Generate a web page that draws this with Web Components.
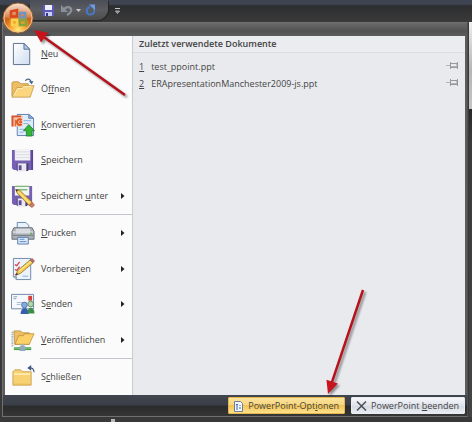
<!DOCTYPE html>
<html lang="de">
<head>
<meta charset="utf-8">
<title>PowerPoint</title>
<style>
  html, body { margin: 0; min-height: 100%; }
  body { font: 9px/14px "Open Sans", "Noto Sans", sans-serif; color: #444; background: #393939; overflow: hidden; }
</style>
</head>
<body>
<office-window></office-window>

<script>
const icons = {
  neu: `<defs><linearGradient id="g" x1="0" y1="0" x2="1" y2="1"><stop stop-color="#fff"/><stop offset="1" stop-color="#cfdcf0"/></linearGradient></defs>
    <path d="M2.5 1.5h11l6 6v16h-17z" fill="url(#g)" stroke="#5b7190"/><path d="M13.5 1.500v6h6z" fill="#aecbf0" stroke="#5b7190"/>`,
  oeffnen: `<path d="M1 20V6l1-1h6l2 2h8v3" fill="#eebf62" stroke="#b58a3a" stroke-width=".8"/>
    <path d="M1 21l5-10h6l1-2h11l-4 12z" fill="#fbd67e" stroke="#c2964a" stroke-width=".8"/>
    <path d="M3 19l4-7h5l1-2h8" fill="none" stroke="#ffeebb"/>
    <path d="M15 4c2-3 5-2 6 1" fill="none" stroke="#45648f" stroke-width="1.3"/><path d="M18.500 4.500h5l-2 3z" fill="#45648f"/>`,
  konvertieren: `<path d="M6.500 1.500h12l5 4v18h-17z" fill="#dfeafb" stroke="#5e7fae"/><path d="M18.500 1.500v4h5z" fill="#8fb5e8" stroke="#5e7fae"/>
    <path d="M13 8h8M13 11h5M9 17h5M9 20h4" stroke="#8bb0e0"/>
    <path d="M1 3h11v11H1z" fill="#f8c0a4"/><path d="M1.500 14V3.500h9" fill="none" stroke="#d4542c" stroke-width="2"/><path d="M4.500 14V7" stroke="#d4542c"/>
    <path d="M11 7.500a2.800 2.800 0 1 0 0 4M8.500 9.500h3" fill="none" stroke="#e2561f" stroke-width="2"/>
    <path d="M18.500 12l6 6.500H22V24h-6v-5.500h-3z" fill="#36b53a" stroke="#178224" stroke-width=".8"/>`,
  speichern: `<path d="M1 2h22v21H3l-2-2z" fill="#7660b4"/><path d="M22 2v21" stroke="#54418c" stroke-width="1.500"/>
    <path d="M4 1h16v12H4z" fill="#f4f4f7"/><path d="M4 4h16M4 7h16M4 10h16" stroke="#d9dae2"/>
    <path d="M6 16h12v8H6z" fill="#463b70"/><path d="M7 16h9v8H7z" fill="#e9e8f0"/><path d="M8 18h3v5H8z" fill="#5d4a9c"/>`,
  unter: `<path d="M1 2h21v20H3l-2-2z" fill="#7660b4"/><path d="M4 1h15v11H4z" fill="#f0f5ee"/><path d="M4 2.500h15M6 6h11" stroke="#80b980" stroke-width="1.500"/>
    <path d="M6 15h11v8H6z" fill="#463b70"/><path d="M7 15h8v8H7z" fill="#e9e8f0"/><path d="M8 17h3v5H8z" fill="#5d4a9c"/>
    <path d="M5 6l4 .5L22 19l-3 3.500L6.500 9.500z" fill="#f6cc55" stroke="#8b6a22" stroke-width=".8"/><path d="M7.500 8L20 20.500" stroke="#fff0a8"/><path d="M19 22.500l3-3.500 2.500 3-2.500 2.500z" fill="#d77a62" stroke="#8e4e46" stroke-width=".6"/><path d="M4.500 5.500l3 .8-1.500 1.800z" fill="#333"/>`,
  drucken: `<path d="M6.500 9V1.500h9l3 3V9" fill="#e9f1fc" stroke="#6786ad"/>
    <path d="M3 7h19l2 4v8H1v-8z" fill="#adb1b7" stroke="#696e76"/><path d="M5 8h15v5H5z" fill="#d8dbdf"/><path d="M2 11.500h3m15 0h3" stroke="#f4f4f4"/>
    <path d="M1.500 15h22" stroke="#777c84"/><path d="M20 13h2" stroke="#51b447" stroke-width="1.500"/><path d="M7 17h11v7H7z" fill="#dceafb" stroke="#587ba9"/><path d="M9 19h5M9 21.500h7" stroke="#5a8ac6"/>`,
  vorbereiten: `<path d="M2.500 1.500h18v22h-15l-3-3z" fill="#edf3fc" stroke="#6f88aa"/><path d="M2.500 20.500h3v3" fill="#bdd0ec" stroke="#6f88aa"/>
    <path d="M4 8l2 1 3-4M4 13l2 1 3-4M4 18l2 1" fill="none" stroke="#d1444c" stroke-width="1.300"/><path d="M12 20h6" stroke="#8caedb"/>
    <path d="M5 19l2-5L20 3l3 3L10 17z" fill="#f6cc55" stroke="#8b6a22" stroke-width=".8"/><path d="M8 15L21 4.500" stroke="#fff0a8"/><path d="M20 3l2-1.500 2.500 2.500-1.500 2z" fill="#bd6c68" stroke="#814b50" stroke-width=".6"/><path d="M5 19l1-2.500 1.500 1.500z" fill="#333"/>`,
  senden: `<path d="M.5 2.500h23v15H.5z" fill="#f5f8fc" stroke="#6f88aa"/><path d="M18 4h4v5h-4z" fill="#d8403c"/><path d="M2.500 5h4M2.500 7h3" stroke="#8f9cb0"/><path d="M6 11h6M6 13h4" stroke="#a7b9d3"/>
    <circle cx="14" cy="13.500" r="3" fill="#87a9dd" stroke="#375e9f" stroke-width=".7"/><path d="M10 23c0-8 8.500-8 8.500 0z" fill="#355fae"/>
    <circle cx="20.500" cy="12.500" r="3" fill="#b5d3b5" stroke="#38783c" stroke-width=".7"/><path d="M17 22.500c0-8 7.500-8 7.500 0z" fill="#3b8d48"/>`,
  publish: `<path d="M1.500 4v15" stroke="#8e9bad" stroke-width="2" stroke-dasharray="1 1"/><path d="M3 3h7l2 2h7v12H4z" fill="#eebf62" stroke="#b58a3a" stroke-width=".8"/>
    <path d="M4 17l4-9h5l1-2h10l-5 11z" fill="#fbd067" stroke="#bd8c34" stroke-width=".8"/><path d="M10 17h4v3h-4z" fill="#a9b7c5"/>
    <path d="M3 21.500h18" stroke="#4a9c4e" stroke-width="3"/><path d="M3 21h18" stroke="#8bcf87"/><path d="M9 19h6v5H9z" fill="#8fa9bd"/>`,
  schliessen: `<path d="M2 7l2-2h6l2 2h9v14H2z" fill="#f8d272" stroke="#bf9443" stroke-width=".8"/><path d="M3 9.500h17" stroke="#fff0bd" stroke-width="1.500"/><path d="M3 20h17" stroke="#e9b950"/>
    <path d="M19 3c3-.5 5 1.500 5 4.500" fill="none" stroke="#43587e" stroke-width="1.200"/><path d="M17 3l4-3v6z" fill="#43587e"/>`
};

function define(name, html, setup) {
  const tpl = document.createElement('template');
  tpl.innerHTML = html;
  customElements.define(name, class extends HTMLElement {
    constructor() {
      super();
      this.attachShadow({ mode: 'open' }).append(tpl.content.cloneNode(true));
    }
    connectedCallback() { if (setup) setup(this, this.shadowRoot); }
  });
}

define('menu-item', `
<style>
  :host { display: flex; flex: 1 0 30px; }
  button { flex: 1; display: grid; grid-template-columns: 24px 1fr 8px; column-gap: 6px; align-items: center;
    padding: 0 4px 0 6px; border: 0; background: none; font: inherit; color: inherit; text-align: left; white-space: nowrap; }
  .icon { width: 24px; height: 24px; }
  .more { width: 8px; height: 8px; }
</style>
<button type="button">
  <svg class="icon" viewBox="0 0 25 25" aria-hidden="true"></svg>
  <span><slot></slot></span>
</button>`, (el, root) => {
  root.querySelector('.icon').innerHTML = icons[el.getAttribute('icon')];
  if (el.hasAttribute('submenu')) {
    root.querySelector('button').setAttribute('aria-haspopup', 'menu');
    root.querySelector('button').insertAdjacentHTML('beforeend', '<svg class="more" viewBox="0 0 8 8" aria-hidden="true"><path d="M1 1l3.500 3-3.500 3z" fill="#222"/></svg>');
  }
});

define('menu-separator', `
<style>:host { display: block; height: 1px; margin: 0 0 1px 35px; background: #c3c6cb; }</style>`);

define('recent-document', `
<style>
  :host { display: flex; align-items: center; gap: 6px; height: 17px; padding: 0 6px; }
  a { flex: 1; display: flex; gap: 7px; color: inherit; text-decoration: none; white-space: nowrap; }
  button { width: 13px; height: 13px; padding: 0; border: 0; background: none; }
  svg { display: block; width: 13px; height: 13px; }
</style>
<a href="#"><u></u><span><slot></slot></span></a>
<button type="button" aria-label="Anheften"><svg viewBox="0 0 13 13"><path d="M0 5.500h4" stroke="#b4b6b9"/><path d="M4.500 2v7M5 3.500h6v4H5M11.500 2v7" fill="none" stroke="#97999c"/><path d="M5 6.500h6" stroke="#b0b2b5"/></svg></button>
`, (el, root) => { root.querySelector('u').textContent = el.getAttribute('number'); });

define('footer-button', `
<style>
  :host { display: flex; }
  button { display: flex; align-items: center; gap: 4px; height: 17px; padding: 0 5px 0 4px; border: 1px solid #e8ebf1; border-radius: 1px;
    background: linear-gradient(#f4f6f9, #dfe3ea 50%, #d3d8e1 51%, #e9edf3); font: inherit; color: inherit; white-space: nowrap; }
  :host([active]) button { border-color: #e2b54e; background: linear-gradient(#fbe4a0, #f8d67d 45%, #f3c455 50%, #fce18a); }
  ::slotted(svg) { width: 11px; height: 12px; flex: none; }
</style>
<button type="button"><slot name="icon"></slot><span><slot></slot></span></button>`);

define('quick-access', `
<style>
  :host { display: flex; align-items: center; height: 22px; gap: 6px; padding-left: 30px; }
  .pill { display: flex; align-items: center; height: 20px; margin-bottom: 2px; padding: 0 10px 0 12px; border-radius: 0 0 11px 0;
    background: linear-gradient(#4b4e57, #5b5d61 50%, #4c4c4d); box-shadow: 1px 1px 1px #252525; }
  button { padding: 0; border: 0; background: none; display: block; }
  svg { display: block; height: 14px; }
</style>
<div class="pill">
  <button type="button" aria-label="Speichern"><svg width="17" viewBox="0 0 17 14"><path d="M1 2h11v11H1z" fill="#5a59bd"/><path d="M3 2h7v5H3z" fill="#eef0ff"/><path d="M3 9h7v4H3z" fill="#c9cff0"/><path d="M4 10h2v3H4z" fill="#34348c"/></svg></button>
  <button type="button" aria-label="Rückgängig"><svg width="16" viewBox="0 0 16 14"><path d="M5 6c4-4 8-1 7 2-.5 2-2 3-4 4" fill="none" stroke="#8a9097" stroke-width="2.200"/><path d="M2 2v7h7z" fill="#8a9097"/></svg></button>
  <button type="button" aria-label="Rückgängig-Liste"><svg width="9" viewBox="0 0 9 14"><path d="M1 6h5L3.500 9z" fill="#c9cbcf"/></svg></button>
  <button type="button" aria-label="Wiederholen"><svg width="14" viewBox="0 0 14 14"><path d="M6 4C1.500 5 2 12 6.500 11.500c3 0 4-2 3.500-4.500" fill="none" stroke="#4778c8" stroke-width="2"/><path d="M5 1.500h6v6z" fill="#6c9ce6"/></svg></button>
</div>
<button type="button" aria-label="Symbolleiste anpassen"><svg width="7" viewBox="0 0 7 14"><path d="M1 4.500h5" stroke="#c5c7ca"/><path d="M1.500 7h4L3.500 9.500z" fill="#777" stroke="#c5c7ca" stroke-width=".8"/></svg></button>`);

define('office-orb', `
<style>
  :host { display: block; position: absolute; left: 2px; top: 2px; }
  button { display: block; padding: 0; border: 0; background: none; }
  svg { display: block; width: 32px; height: 32px; }
</style>
<button type="button" aria-label="Office"><svg viewBox="0 0 32 32">
  <defs><radialGradient id="o" cx=".5" cy=".9" r=".85"><stop stop-color="#ffec7a"/><stop offset=".3" stop-color="#f8a432"/><stop offset=".6" stop-color="#cf5f1a"/><stop offset="1" stop-color="#dfa076"/></radialGradient>
  <linearGradient id="h" x1="0" y1="0" x2="0" y2="1"><stop stop-color="#fff" stop-opacity=".6"/><stop offset="1" stop-color="#fff" stop-opacity=".1"/></linearGradient></defs>
  <circle cx="16" cy="16" r="15" fill="url(#o)" stroke="#8d6038"/><circle cx="16" cy="16" r="14" fill="none" stroke="#f4c48e"/>
  <path d="M3 15a13 13 0 0 1 26 0c-8 3-18 3-26 0z" fill="url(#h)"/>
  <g fill="none" stroke-width="2.500"><path d="M9 9.500l6-1.500v6.500H9z" stroke="#d8481c"/><path d="M18 11h5v4.500h-5z" stroke="#6f95bd"/><path d="M10 18h5v5h-5z" stroke="#fbd04a"/><path d="M18 18h6v5h-6z" stroke="#86a63c"/></g>
</svg></button>`);

define('app-menu', `
<style>
  :host { flex: 1; display: flex; flex-direction: column; margin: 0 1px 5px 2px; border: 1px solid #707070; border-right-color: #4d4f50;
    background: #5a5c5e; }
  .top { height: 13px; background: linear-gradient(#6a6a6a, #535353 60%, #5c5c5c); }
  .panels { flex: 1; display: flex; margin: 0 2px; }
  nav { flex: 0 0 127px; display: flex; flex-direction: column; background: #fbfbfb; border-right: 1px solid #c8cbd0; }
  section { flex: 1; background: #e9eaee; }
  h2 { margin: 0 0 5px; padding: 1px 6px; font-size: 9px; line-height: 14px; font-weight: 600; border-bottom: 1px solid #dadde2; background: #ebecef; }
  footer { display: flex; justify-content: flex-end; align-items: center; gap: 6px; height: 21px; padding-right: 2px; background: linear-gradient(#40454e, #3a3f48 45%, #2a2b2b 55%, #363636); }
</style>
<div class="top"></div>
<div class="panels">
  <nav aria-label="Datei">
    <menu-item icon="neu"><u>N</u>eu</menu-item>
    <menu-item icon="oeffnen">Ö<u>f</u>fnen</menu-item>
    <menu-item icon="konvertieren"><u>K</u>onvertieren</menu-item>
    <menu-item icon="speichern"><u>S</u>peichern</menu-item>
    <menu-item icon="unter" submenu>Speichern <u>u</u>nter</menu-item>
    <menu-separator></menu-separator>
    <menu-item icon="drucken" submenu><u>D</u>rucken</menu-item>
    <menu-item icon="vorbereiten" submenu>Vorberei<u>t</u>en</menu-item>
    <menu-item icon="senden" submenu>S<u>e</u>nden</menu-item>
    <menu-item icon="publish" submenu><u>V</u>eröffentlichen</menu-item>
    <menu-separator></menu-separator>
    <menu-item icon="schliessen">S<u>c</u>hließen</menu-item>
  </nav>
  <section>
    <h2>Zuletzt verwendete Dokumente</h2>
    <recent-document number="1">test_ppoint.ppt</recent-document>
    <recent-document number="2">ERApresentationManchester2009-js.ppt</recent-document>
  </section>
</div>
<footer>
  <footer-button active><svg slot="icon" viewBox="0 0 11 12"><path d="M1.500 1.500h6l2 2v8h-8z" fill="#f2f6fc" stroke="#6d7d94"/><path d="M3 4.500h2M4 4v4M3 9h2M7 5v1M7 7v2" stroke="#3f66a3"/></svg>PowerPoint-Opt<u>i</u>onen</footer-button>
  <footer-button><svg slot="icon" viewBox="0 0 11 12"><path d="M1 1.500l9 9M10 1.500l-9 9" stroke="#4b4e55" stroke-width="1.500"/></svg>PowerPoint <u>b</u>eenden</footer-button>
</footer>`);

define('pointer-arrow', `
<style>
  :host { position: absolute; pointer-events: none; }
  svg { display: block; overflow: visible; filter: drop-shadow(2px 2px 1px #0006); }
</style>
<svg aria-hidden="true"><line stroke="#b5121b" stroke-width="2.500"/><path fill="#c8141c"/></svg>`, (el, root) => {
  const [x1, y1, x2, y2] = el.getAttribute('points').split(' ').map(Number);
  const a = Math.atan2(y2 - y1, x2 - x1), c = Math.cos(a), s = Math.sin(a);
  const svg = root.querySelector('svg'), line = root.querySelector('line');
  svg.setAttribute('width', Math.max(x1, x2));
  svg.setAttribute('height', Math.max(y1, y2));
  line.setAttribute('x1', x1); line.setAttribute('y1', y1);
  line.setAttribute('x2', x2 - 9 * c); line.setAttribute('y2', y2 - 9 * s);
  const p = (l, w) => (x2 - l * c - w * s) + ' ' + (y2 - l * s + w * c);
  root.querySelector('path').setAttribute('d', 'M' + p(0, 0) + 'L' + p(13, 6) + 'L' + p(13, -6) + 'z');
});

define('office-window', `
<style>
  :host { position: relative; display: flex; flex-direction: column; min-height: 100vh;
    background: linear-gradient(#3f4452 0 4px, #2d2e30 6px, #3a3a3a 22px, #393939); }
  main { flex: 1; display: flex; }
  .edge { width: 3px; margin-bottom: 5px; background: linear-gradient(#eee, #b5b5b5 12%, #c4c4c4 22%, #282828 22%, #3a3a3a 30%, #444); }
  .tick { position: absolute; left: 111px; bottom: 0; width: 4px; height: 3px; background: #b9b9b9; }
  .a { left: 33px; top: 30px; }
  .b { left: 327px; top: 289px; }
</style>
<quick-access></quick-access>
<main><app-menu></app-menu><div class="edge"></div></main>
<div class="tick"></div>
<office-orb></office-orb>
<pointer-arrow class="a" points="92 65 1 0"></pointer-arrow>
<pointer-arrow class="b" points="36 1 1 105"></pointer-arrow>`);
</script>
</body>
</html>
